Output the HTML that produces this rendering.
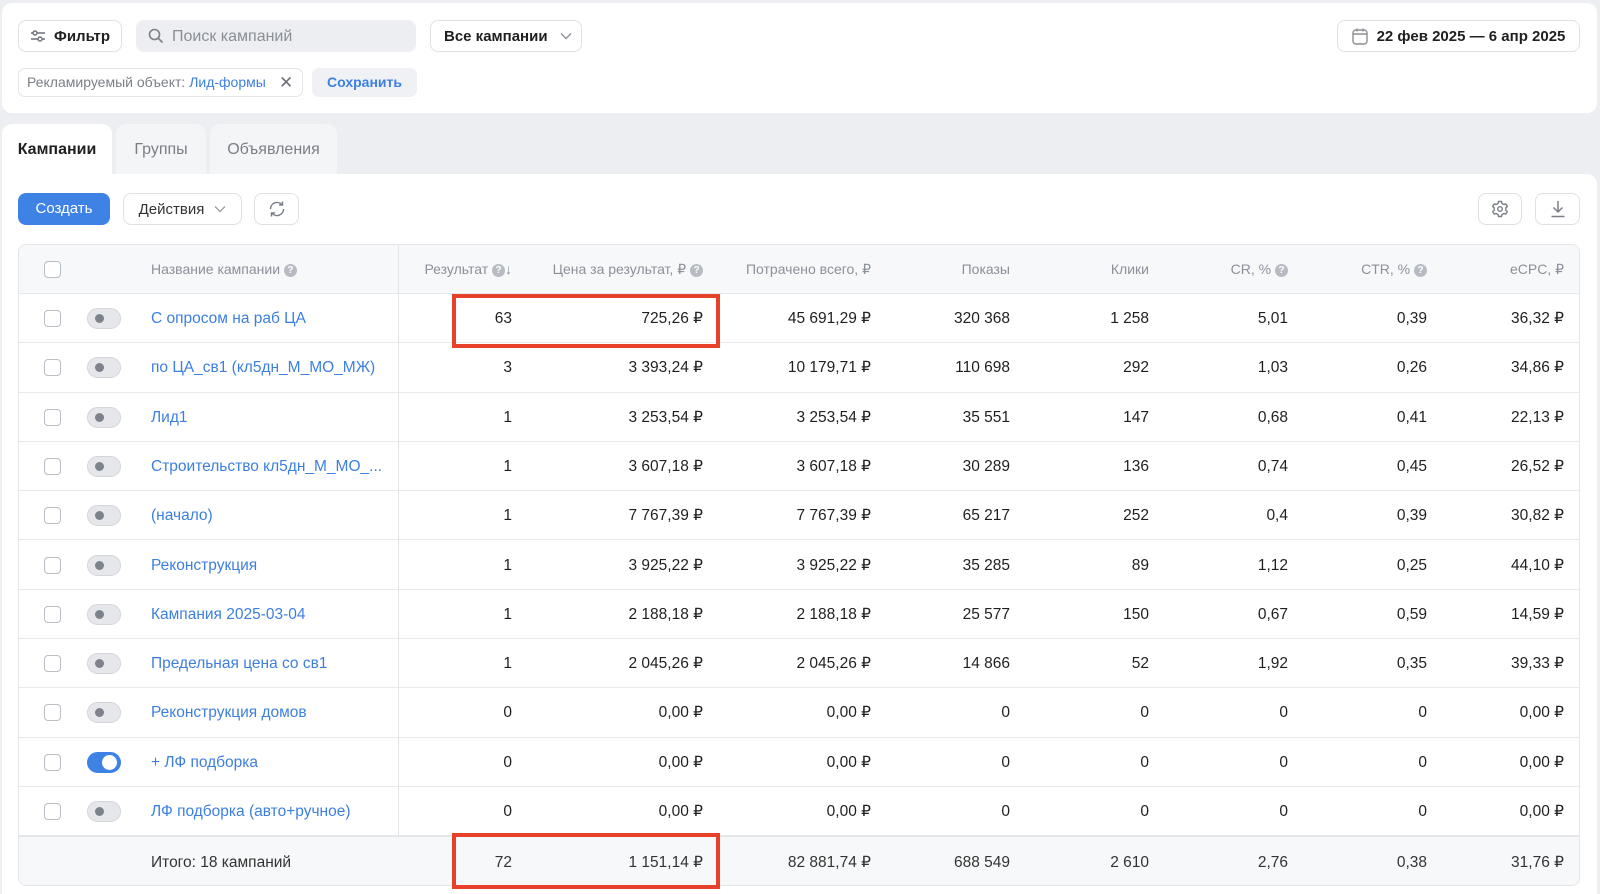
<!DOCTYPE html>
<html><head><meta charset="utf-8"><style>
*{box-sizing:border-box;margin:0;padding:0}
body{width:1600px;height:886px;background:#eceef2;font-family:"Liberation Sans",sans-serif;position:relative;overflow:hidden;color:#1f1f1f}
.abs{position:absolute}
.card{background:#fff;border-radius:10px}
.btn{position:absolute;border:1px solid #dfe1e5;border-radius:8px;background:#fff;display:flex;align-items:center;justify-content:center;font-size:15px}
.tab{position:absolute;top:124px;height:52px;border-radius:10px 10px 0 0;background:#f4f5f7;font-size:16px;color:#7a7f87;display:flex;align-items:center;justify-content:center}
.table{position:absolute;left:18px;top:244px;width:1562px;height:642px;border:1px solid #e3e5e8;border-radius:8px;overflow:hidden}
.row{position:absolute;left:0;width:1562px;height:49.3px;border-bottom:1px solid #e8e9ec;font-size:15.5px}
.c{position:absolute;top:0;height:49px;line-height:49px;text-align:right;white-space:nowrap}
.hd{color:#8b9099;font-size:14px}
.cb{position:absolute;left:25px;top:16px;width:17px;height:17px;border:1.5px solid #b9bdc4;border-radius:4px;background:#fff}
.tg{position:absolute;left:68px;top:14px;width:34px;height:21px;border-radius:11px;background:#e6e7ea;border:1px solid #d4d6da}
.tg::after{content:"";position:absolute;left:7px;top:5px;width:9px;height:9px;border-radius:50%;background:#7d828b}
.tg.on{background:#3f82e6;border-color:#3f82e6}
.tg.on::after{left:auto;right:3px;top:2px;width:15px;height:15px;background:#fff}
.nm{position:absolute;left:132px;top:0;line-height:49px;color:#3d7fe0}
.q{display:inline-block;width:13px;height:13px;border-radius:50%;background:#b7bbc2;color:#fff;font-size:10px;line-height:13px;text-align:center;font-weight:bold;vertical-align:1px}
.red{position:absolute;border:4px solid #e8412a}
</style></head><body>
<div class="abs card" style="left:2px;top:3px;width:1595px;height:110px"></div>
<div class="btn" style="left:18px;top:20px;width:104px;height:32px;font-weight:bold">
<svg width="16" height="14" viewBox="0 0 16 14" style="margin-right:8px"><g stroke="#6b7079" stroke-width="1.4" fill="none"><path d="M1 4h14M1 10h14"/><circle cx="5" cy="4" r="2" fill="#fff"/><circle cx="10" cy="10" r="2" fill="#fff"/></g></svg>Фильтр</div>
<div class="abs" style="left:136px;top:20px;width:280px;height:32px;background:#eceef1;border-radius:8px;font-size:16px;color:#8a8f97;line-height:33px;padding-left:36px">
<svg width="16" height="16" viewBox="0 0 16 16" style="position:absolute;left:12px;top:8px"><circle cx="6.5" cy="6.5" r="5" stroke="#7a7f87" stroke-width="1.6" fill="none"/><path d="M10.5 10.5L14.5 14.5" stroke="#7a7f87" stroke-width="1.6"/></svg>Поиск кампаний</div>
<div class="btn" style="left:430px;top:20px;width:152px;height:32px;font-weight:bold;justify-content:flex-start;padding-left:13px">Все кампании<svg width="12" height="8" viewBox="0 0 12 8" style="margin-left:12px"><path d="M1 1.5l5 5 5-5" stroke="#8a8f97" stroke-width="1.4" fill="none"/></svg></div>
<div class="btn" style="left:1337px;top:20px;width:243px;height:32px;font-weight:bold">
<svg width="16" height="17" viewBox="0 0 16 17" style="margin-right:9px"><rect x="1" y="2" width="14" height="14" rx="3" stroke="#8a8f97" stroke-width="1.4" fill="none"/><path d="M1 6h14M5 0.5v3M11 0.5v3" stroke="#8a8f97" stroke-width="1.4"/></svg>22 фев 2025 — 6 апр 2025</div>
<div class="abs" style="left:18px;top:68px;width:285px;height:29px;border:1px solid #e3e5e8;border-radius:7px;font-size:14px;color:#7a7f87;line-height:27px;padding-left:8px">Рекламируемый объект: <span style="color:#3d7fe0">Лид-формы</span><span style="position:absolute;left:260px;top:0;font-size:17px;color:#6b7079">✕</span></div>
<div class="abs" style="left:312px;top:68px;width:105px;height:29px;background:#eff1f4;border-radius:7px;font-size:14px;color:#3d7fe0;line-height:29px;text-align:center;font-weight:bold">Сохранить</div>

<div class="tab" style="left:2px;width:110px;background:#fff;color:#1f1f1f;font-weight:bold">Кампании</div>
<div class="tab" style="left:116px;width:90px">Группы</div>
<div class="tab" style="left:210px;width:127px">Объявления</div>
<div class="abs" style="left:2px;top:174px;width:1595px;height:720px;background:#fff;border-radius:0 10px 0 0"></div>

<div class="abs" style="left:18px;top:193px;width:92px;height:32px;background:#3f82e6;border-radius:8px;color:#fff;font-size:15px;line-height:32px;text-align:center">Создать</div>
<div class="btn" style="left:123px;top:193px;width:119px;height:32px;color:#333">Действия<svg width="12" height="8" viewBox="0 0 12 8" style="margin-left:10px"><path d="M1 1.5l5 5 5-5" stroke="#9a9fa7" stroke-width="1.4" fill="none"/></svg></div>
<div class="btn" style="left:254px;top:193px;width:45px;height:32px"><svg width="20" height="20" viewBox="0 0 20 20"><g stroke="#7a7f87" stroke-width="1.5" fill="none"><path d="M3.5 10a6.5 6.5 0 0 1 11.5-4.2M16.5 10A6.5 6.5 0 0 1 5 14.2"/><path d="M15.5 2.5v3.5h-3.5M4.5 17.5v-3.5h3.5"/></g></svg></div>
<div class="btn" style="left:1478px;top:193px;width:44px;height:32px"><svg width="18" height="18" viewBox="0 0 18 18"><g stroke="#7a7f87" stroke-width="1.4" fill="none"><path d="M7.5 1.5h3l.5 2 1.8 1 2-.6 1.5 2.6-1.5 1.4v2.2l1.5 1.4-1.5 2.6-2-.6-1.8 1-.5 2h-3l-.5-2-1.8-1-2 .6-1.5-2.6 1.5-1.4V7.9L1.7 6.5l1.5-2.6 2 .6 1.8-1z"/><circle cx="9" cy="9" r="2.3"/></g></svg></div>
<div class="btn" style="left:1535px;top:193px;width:45px;height:32px"><svg width="16" height="18" viewBox="0 0 16 18"><g stroke="#7a7f87" stroke-width="1.5" fill="none"><path d="M8 1v11M3.5 7.5L8 12l4.5-4.5M1.5 16.5h13"/></g></svg></div>

<div class="table">
<div class="row hd" style="top:0;height:49px;background:#f7f8f9">
<div class="cb" style="top:16px"></div>
<div class="c" style="left:132px;text-align:left">Название кампании <span class="q">?</span></div>
<div style="position:absolute;left:379px;top:0;width:1px;height:49px;background:#e3e5e8"></div>
<div class="c" style="right:1069px">Результат <span class="q">?</span>↓</div>
<div class="c" style="right:878px">Цена за результат, ₽ <span class="q">?</span></div>
<div class="c" style="right:710px">Потрачено всего, ₽</div>
<div class="c" style="right:571px">Показы</div>
<div class="c" style="right:432px">Клики</div>
<div class="c" style="right:293px">CR, % <span class="q">?</span></div>
<div class="c" style="right:154px">CTR, % <span class="q">?</span></div>
<div class="c" style="right:17px">eCPC, ₽</div>
</div>
<div id="rows"></div>
</div>
<div class="red" style="left:452px;top:294px;width:268px;height:54px"></div>
<div class="red" style="left:452px;top:833px;width:268px;height:56px"></div>
<script>
var d=[["С опросом на раб ЦА","63","725,26 ₽","45 691,29 ₽","320 368","1 258","5,01","0,39","36,32 ₽"],
["по ЦА_св1 (кл5дн_М_МО_МЖ)","3","3 393,24 ₽","10 179,71 ₽","110 698","292","1,03","0,26","34,86 ₽"],
["Лид1","1","3 253,54 ₽","3 253,54 ₽","35 551","147","0,68","0,41","22,13 ₽"],
["Строительство кл5дн_М_МО_...","1","3 607,18 ₽","3 607,18 ₽","30 289","136","0,74","0,45","26,52 ₽"],
["(начало)","1","7 767,39 ₽","7 767,39 ₽","65 217","252","0,4","0,39","30,82 ₽"],
["Реконструкция","1","3 925,22 ₽","3 925,22 ₽","35 285","89","1,12","0,25","44,10 ₽"],
["Кампания 2025-03-04","1","2 188,18 ₽","2 188,18 ₽","25 577","150","0,67","0,59","14,59 ₽"],
["Предельная цена со св1","1","2 045,26 ₽","2 045,26 ₽","14 866","52","1,92","0,35","39,33 ₽"],
["Реконструкция домов","0","0,00 ₽","0,00 ₽","0","0","0","0","0,00 ₽"],
["+ ЛФ подборка","0","0,00 ₽","0,00 ₽","0","0","0","0","0,00 ₽"],
["ЛФ подборка (авто+ручное)","0","0,00 ₽","0,00 ₽","0","0","0","0","0,00 ₽"]];
var R=[1069,878,710,571,432,293,154,17],h="";
d.forEach(function(r,i){h+='<div class="row" style="top:'+(49+i*49.3)+'px"><div class="cb"></div><div class="tg'+(i==9?' on':'')+'"></div><div class="nm">'+r[0]+'</div><div style="position:absolute;left:379px;top:0;width:1px;height:50px;background:#e3e5e8"></div>';
for(var j=1;j<9;j++)h+='<div class="c" style="right:'+R[j-1]+'px">'+r[j]+'</div>';h+='</div>';});
var f=["72","1 151,14 ₽","82 881,74 ₽","688 549","2 610","2,76","0,38","31,76 ₽"];
h+='<div class="row" style="top:591px;height:54px;background:#f7f8f9;border-top:1px solid #e3e5e8"><div class="c" style="left:132px;text-align:left;line-height:52px;color:#333">Итого: 18 кампаний</div>';
for(var j=0;j<8;j++)h+='<div class="c" style="right:'+R[j]+'px;line-height:52px;color:#333">'+f[j]+'</div>';h+='</div>';
document.getElementById("rows").innerHTML=h;
</script>
</body></html>
